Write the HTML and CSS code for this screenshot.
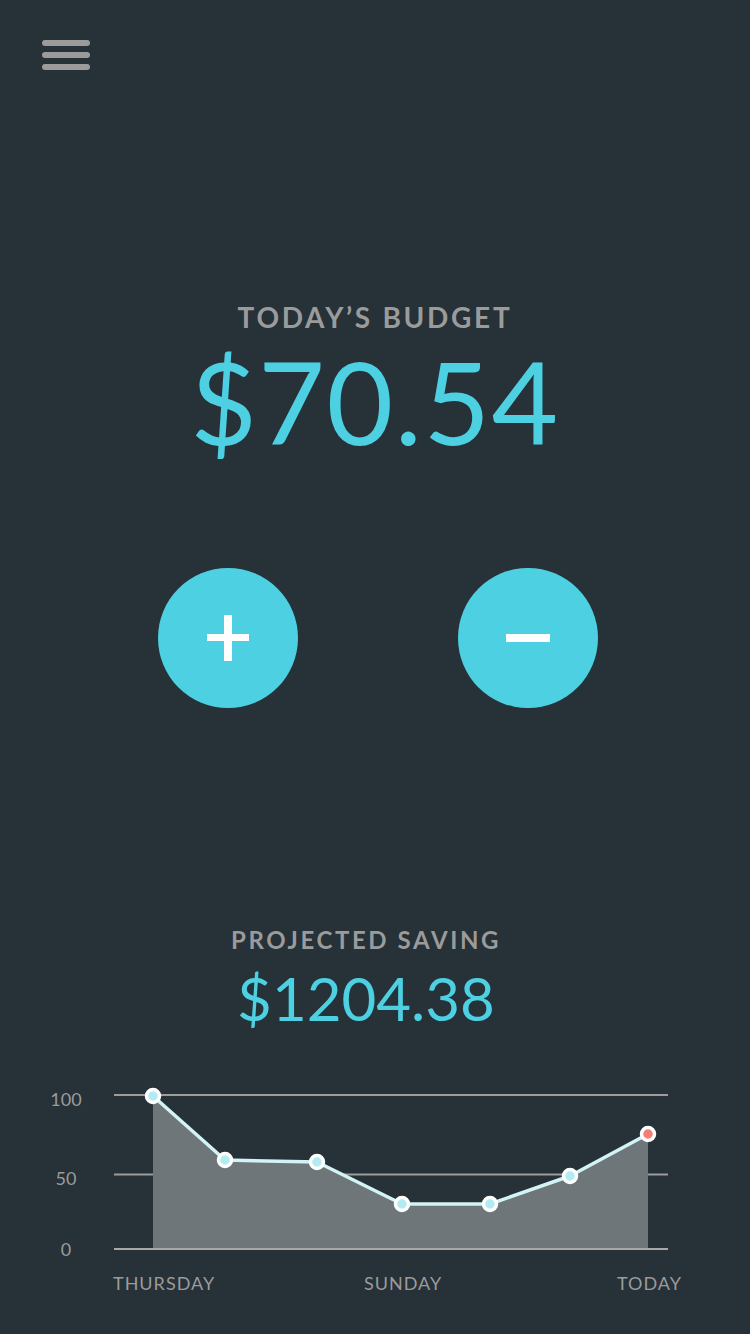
FILE: index.html
```html
<!DOCTYPE html>
<html>
<head>
<meta charset="utf-8">
<link rel="stylesheet" href="styles.css">
</head>
<body>
<div class="screen">
  <header class="topbar">
    <div class="menu"><span></span><span></span><span></span></div>
  </header>
  <section class="budget">
    <div class="label">TODAY’S BUDGET</div>
    <div class="amount big">$70.54</div>
  </section>
  <section class="actions">
    <button class="circle" aria-label="add">
      <svg width="42" height="46" viewBox="0 0 42 46"><rect x="17" y="0" width="8" height="46" fill="#fff"/><rect x="0" y="19" width="42" height="7" fill="#fff"/></svg>
    </button>
    <button class="circle" aria-label="subtract">
      <svg width="44" height="8" viewBox="0 0 44 8"><rect x="0" y="0" width="44" height="8" fill="#fff"/></svg>
    </button>
  </section>
  <section class="saving">
    <div class="label small">PROJECTED SAVING</div>
    <div class="amount mid">$1204.38</div>
  </section>
  <svg class="chart" width="750" height="230" viewBox="0 1080 750 230">
    <line x1="114" y1="1095" x2="668" y2="1095" stroke="#9c9c9c" stroke-width="2"/>
    <line x1="114" y1="1174.5" x2="668" y2="1174.5" stroke="#9c9c9c" stroke-width="2"/>
    <polygon points="153,1096 225,1160 317,1162 402,1204 490,1204 570,1176 648,1134 648,1249 153,1249" fill="#6e7679"/>
    <line x1="114" y1="1249" x2="668" y2="1249" stroke="#a8a8a8" stroke-width="2"/>
    <polyline points="153,1096 225,1160 317,1162 402,1204 490,1204 570,1176 648,1134" fill="none" stroke="#d3f4f7" stroke-width="3.5" stroke-linejoin="round"/>
    <g stroke="#fff" stroke-width="3.5" fill="#b2ebf2">
      <circle cx="153" cy="1096" r="6.5"/>
      <circle cx="225" cy="1160" r="6.5"/>
      <circle cx="317" cy="1162" r="6.5"/>
      <circle cx="402" cy="1204" r="6.5"/>
      <circle cx="490" cy="1204" r="6.5"/>
      <circle cx="570" cy="1176" r="6.5"/>
      <circle cx="648" cy="1134" r="6.5" fill="#f47f72"/>
    </g>
    <g class="axis" text-anchor="middle">
      <text x="66" y="1106">100</text>
      <text x="66" y="1185">50</text>
      <text x="66" y="1256">0</text>
    </g>
    <g class="axis days">
      <text x="113" y="1290">THURSDAY</text>
      <text x="364" y="1290">SUNDAY</text>
      <text x="617" y="1290">TODAY</text>
    </g>
  </svg>
</div>
</body>
</html>
```
FILE: styles.css
```css
html, body {
  margin: 0;
  padding: 0;
  background: #263138;
}
.screen {
  width: 750px;
  height: 1334px;
  background: #263138;
  font-family: Lato, "Open Sans", sans-serif;
  display: flex;
  flex-direction: column;
  overflow: hidden;
}
.topbar {
  padding: 40px 0 0 42px;
  height: 30px;
}
.menu {
  display: flex;
  flex-direction: column;
  gap: 6px;
  width: 48px;
}
.menu span {
  display: block;
  height: 6px;
  border-radius: 3px;
  background: #9b9b9b;
}
.budget, .saving {
  display: flex;
  flex-direction: column;
  align-items: center;
}
.budget {
  margin-top: 233px;
}
.label {
  color: #9b9b9b;
  font-size: 28px;
  line-height: 1;
  font-weight: 700;
  letter-spacing: 2.7px;
}
.label.small {
  font-size: 24px;
  letter-spacing: 2.6px;
}
.amount {
  color: #4dd0e1;
  line-height: normal;
  font-weight: 400;
}
.amount.big {
  font-size: 115px;
  letter-spacing: 1.5px;
}
.amount.mid {
  font-size: 60px;
  margin-top: 10px;
}
.actions {
  display: flex;
  justify-content: center;
  gap: 160px;
  padding-left: 6px;
  margin-top: 99px;
}
.circle {
  width: 140px;
  height: 140px;
  border-radius: 50%;
  background: #4dd0e1;
  border: none;
  padding: 0;
  display: flex;
  align-items: center;
  justify-content: center;
}
.saving {
  margin-top: 220px;
  padding-right: 18px;
}
.chart {
  display: block;
  margin-top: 46px;
}
.axis text {
  fill: #9b9b9b;
  font-family: Lato, "Open Sans", sans-serif;
  font-size: 18px;
}
.days text {
  letter-spacing: 1px;
}
```
